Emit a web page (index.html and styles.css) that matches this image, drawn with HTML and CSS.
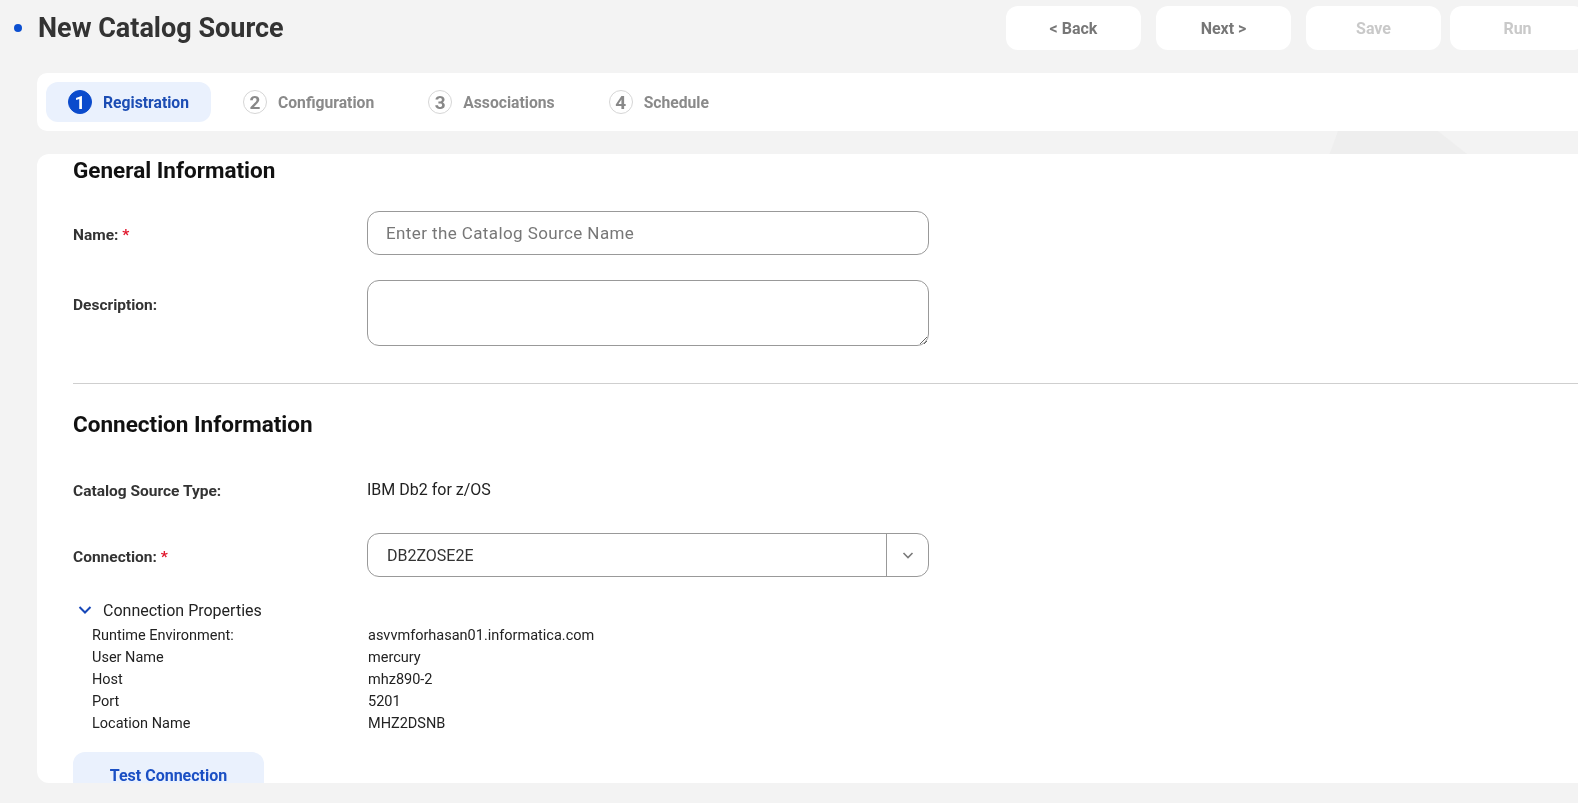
FILE: index.html
```html
<!DOCTYPE html>
<html lang="en">
<head>
  <meta charset="UTF-8" />
  <meta name="viewport" content="width=device-width, initial-scale=1.0"/>
  <title>New Catalog Source</title>
  <link rel="stylesheet" href="styles.css">
</head>
<body>
  <header class="topbar">
    <div class="title">
      <span class="dot"></span>
      <h1>New Catalog Source</h1>
    </div>
    <div class="actions">
      <button class="btn">&lt; Back</button>
      <button class="btn">Next &gt;</button>
      <button class="btn disabled">Save</button>
      <button class="btn disabled run">Run</button>
    </div>
  </header>

  <nav class="stepper">
    <div class="step active"><span class="num">1</span>Registration</div>
    <div class="step"><span class="num">2</span>Configuration</div>
    <div class="step"><span class="num">3</span>Associations</div>
    <div class="step"><span class="num">4</span>Schedule</div>
  </nav>

  <main class="card">
    <h2 class="section-title">General Information</h2>

    <div class="field">
      <label for="sourceName">Name: <span class="req">*</span></label>
      <input type="text" id="sourceName" placeholder="Enter the Catalog Source Name" />
    </div>

    <div class="field field-top">
      <label for="sourceDesc">Description:</label>
      <textarea id="sourceDesc"></textarea>
    </div>

    <hr class="divider" />

    <h2 class="section-title second">Connection Information</h2>

    <div class="field static">
      <label>Catalog Source Type:</label>
      <span class="value">IBM Db2 for z/OS</span>
    </div>

    <div class="field">
      <label>Connection: <span class="req">*</span></label>
      <div class="select">
        <span class="select-value">DB2ZOSE2E</span>
        <span class="select-arrow">
          <svg width="14" height="14" viewBox="0 0 14 14"><path d="M2.5 5l4.5 4.5L11.5 5" fill="none" stroke="#7a7a7a" stroke-width="1.6"/></svg>
        </span>
      </div>
    </div>

    <div class="props-toggle">
      <svg width="14" height="14" viewBox="0 0 14 14"><path d="M1.5 4l5.5 5.5L12.5 4" fill="none" stroke="#1747b8" stroke-width="2"/></svg>
      Connection Properties
    </div>
    <div class="props">
      <span>Runtime Environment:</span><span>asvvmforhasan01.informatica.com</span>
      <span>User Name</span><span>mercury</span>
      <span>Host</span><span>mhz890-2</span>
      <span>Port</span><span>5201</span>
      <span>Location Name</span><span>MHZ2DSNB</span>
    </div>

    <button class="test-btn">Test Connection</button>
  </main>
</body>
</html>
```

FILE: styles.css
```css
html, body {
  margin: 0;
  height: 100%;
  overflow: hidden;
}

body {
  font-family: Roboto, "Liberation Sans", sans-serif;
  background-color: #f3f3f3;
  color: #222;
  position: relative;
}

body::before {
  content: "";
  position: fixed;
  inset: 0;
  background: #eeeeee;
  clip-path: polygon(1342px 120px, 1424px 120px, 1500px 180px, 1320px 180px);
  z-index: -1;
}

/* header */
.topbar {
  display: flex;
  align-items: center;
  justify-content: space-between;
  padding-top: 6px;
  height: 44px;
}

.title {
  display: flex;
  align-items: center;
}

.dot {
  width: 8px;
  height: 8px;
  border-radius: 50%;
  background-color: #0b4fd0;
  margin: 0 16px 0 14px;
}

h1 {
  margin: 0;
  font-size: 27px;
  font-weight: 700;
  color: #333;
}

.actions {
  display: flex;
  gap: 15px;
  margin-right: -7px;
}

.btn {
  width: 135px;
  height: 44px;
  border: none;
  border-radius: 12px;
  background-color: #fff;
  font-family: inherit;
  font-size: 16px;
  font-weight: 700;
  color: #777;
}

.btn.disabled {
  color: #c9c9c9;
}

.btn.run {
  margin-left: -6px;
}

/* stepper */
.stepper {
  display: flex;
  align-items: center;
  gap: 10px;
  height: 58px;
  margin: 23px -20px 0 37px;
  padding: 0 9px;
  background-color: #fff;
  border-radius: 10px;
}

.step {
  display: flex;
  align-items: center;
  gap: 11px;
  height: 40px;
  padding: 0 22px;
  border-radius: 12px;
  font-size: 15.7px;
  font-weight: 700;
  color: #8a8a8a;
}

.step .num {
  box-sizing: border-box;
  width: 24px;
  height: 24px;
  border-radius: 50%;
  border: 1px solid #d6d6d6;
  display: flex;
  align-items: center;
  justify-content: center;
  font-size: 19px;
  color: #888;
}

.step.active {
  background-color: #eaf1fd;
  color: #1c4db4;
}

.step.active .num {
  background-color: #0b4bcc;
  border-color: #0b4bcc;
  color: #fff;
}

/* main card */
.card {
  height: 629px;
  margin: 23px -20px 0 37px;
  padding-left: 36px;
  background-color: #fff;
  border-radius: 12px;
  overflow: hidden;
}

.section-title {
  margin: 2px 0 27px;
  font-size: 22.5px;
  font-weight: 700;
  line-height: 28px;
  color: #111;
}

.section-title.second {
  margin: 26px 0 29px;
}

.field {
  display: grid;
  grid-template-columns: 294px 562px;
  align-items: center;
  margin-bottom: 25px;
}

.field.field-top {
  align-items: start;
  margin-bottom: 37px;
}

.field.field-top label {
  padding-top: 16px;
}

.field.static {
  height: 44px;
  margin-bottom: 22px;
}

label {
  padding-top: 4px;
  font-size: 15.5px;
  font-weight: 700;
  line-height: 18px;
  color: #333;
}

.req {
  color: #e0182d;
}

.value {
  font-size: 16px;
  color: #222;
}

input, textarea {
  box-sizing: border-box;
  width: 100%;
  border: 1px solid #999;
  border-radius: 12px;
  font-family: inherit;
  font-size: 17px;
  color: #222;
}

input {
  height: 44px;
  padding: 0 18px;
}

input::placeholder {
  color: #777;
  letter-spacing: 0.4px;
}

textarea {
  height: 66px;
  padding: 10px 18px;
  resize: vertical;
  display: block;
}

.divider {
  margin: 0;
  border: none;
  border-top: 1px solid #cfcfcf;
}

.select {
  box-sizing: border-box;
  display: flex;
  align-items: center;
  height: 44px;
  border: 1px solid #999;
  border-radius: 12px;
}

.select-value {
  flex: 1;
  padding-left: 19px;
  font-size: 16px;
  color: #333;
}

.select-arrow {
  width: 41px;
  height: 100%;
  border-left: 1px solid #999;
  display: flex;
  align-items: center;
  justify-content: center;
}

.props-toggle {
  display: flex;
  align-items: center;
  gap: 11px;
  margin-top: -2px;
  padding-left: 5px;
  height: 20px;
  font-size: 16px;
  color: #222;
}

.props {
  display: grid;
  grid-template-columns: 276px auto;
  margin-top: 5px;
  padding-left: 19px;
  font-size: 14.5px;
  line-height: 22px;
  color: #222;
}

.test-btn {
  width: 191px;
  height: 46px;
  margin-top: 17px;
  border: none;
  border-radius: 12px;
  background-color: #eaf1fd;
  font-family: inherit;
  font-size: 16px;
  font-weight: 700;
  color: #1a4fc4;
}
```
